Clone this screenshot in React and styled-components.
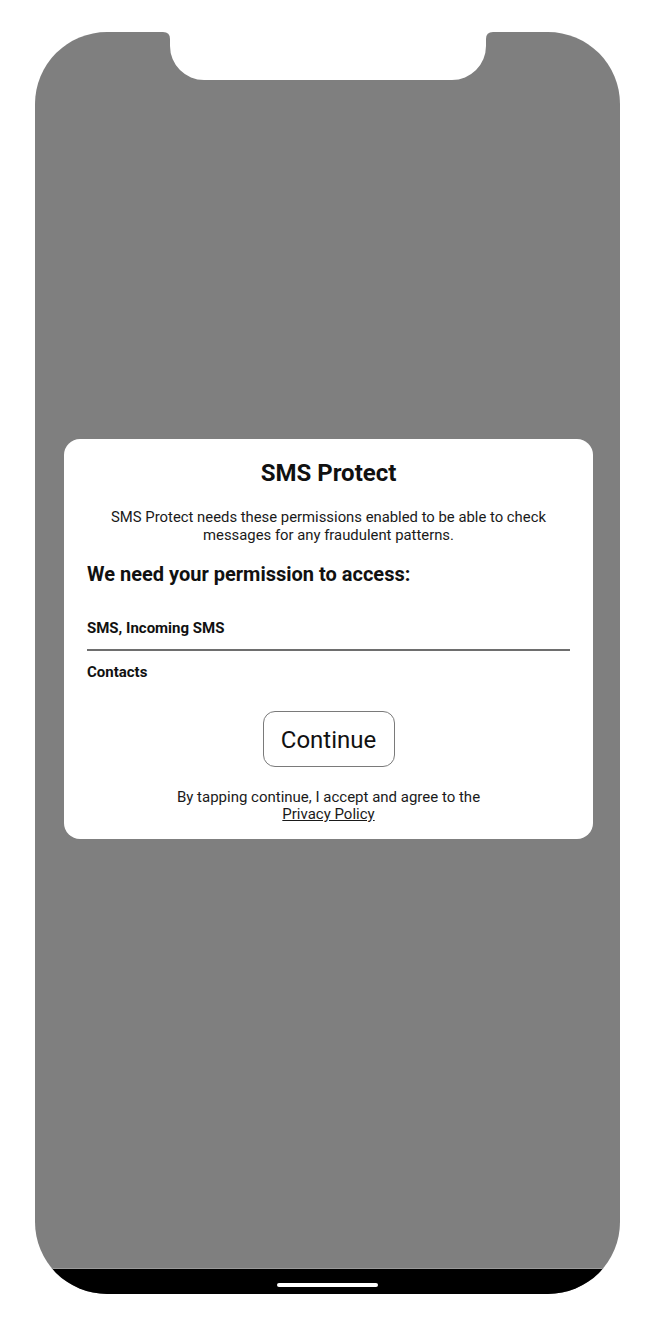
import React from "react"
import styled, { createGlobalStyle } from "styled-components"

const GlobalStyle = createGlobalStyle`
  body {
    margin: 0;
    background: #fff;
    font-family: Roboto, "Liberation Sans", sans-serif;
  }
`

const App = () => {
  return (
    <Page>
      <GlobalStyle />
      <Phone>
        <Notch width="330" height="48" viewBox="0 0 330 48">
          <path
            d="M0 0 H330 Q323 0 323 7 V14 A34 34 0 0 1 289 48 H41 A34 34 0 0 1 7 14 V7 Q7 0 0 0 Z"
            fill="#fff"
          />
        </Notch>
        <Screen>
          <Card>
            <Title>SMS Protect</Title>
            <Description>
              SMS Protect needs these permissions enabled to be able to check
              messages for any fraudulent patterns.
            </Description>
            <Heading>We need your permission to access:</Heading>
            <PermissionList>
              <PermissionItem>SMS, Incoming SMS</PermissionItem>
              <PermissionItem>Contacts</PermissionItem>
            </PermissionList>
            <ButtonRow>
              <ContinueButton type="button">Continue</ContinueButton>
            </ButtonRow>
            <Terms>
              By tapping continue, I accept and agree to the
              <br />
              <PolicyLink href="#">Privacy Policy</PolicyLink>
            </Terms>
          </Card>
        </Screen>
        <HomeBar>
          <HomeIndicator />
        </HomeBar>
      </Phone>
    </Page>
  )
}

export default App

const Page = styled.div`
  padding: 32px 0 0 35px;
`

const Phone = styled.div`
  position: relative;
  width: 585px;
  height: 1262px;
  border-radius: 72px;
  overflow: hidden;
  background: #7f7f7f;
  display: flex;
  flex-direction: column;
`

const Notch = styled.svg`
  position: absolute;
  top: 0;
  left: 50%;
  transform: translateX(-50%);
  display: block;
`

const Screen = styled.div`
  flex: 1;
  padding: 407px 0 0 29px;
`

const Card = styled.div`
  width: 529px;
  box-sizing: border-box;
  background: #fff;
  border-radius: 16px;
  padding: 20px 23px 16px;
  color: #111;
`

const Title = styled.h1`
  margin: 0;
  font-size: 24px;
  line-height: 28px;
  font-weight: 700;
  text-align: center;
`

const Description = styled.p`
  margin: 21px 0 0;
  font-size: 14.85px;
  line-height: 18px;
  text-align: center;
  color: #1a1a1a;
`

const Heading = styled.h2`
  margin: 18px 0 0;
  font-size: 20px;
  line-height: 24px;
  font-weight: 700;
`

const PermissionList = styled.div`
  margin-top: 22px;
  display: flex;
  flex-direction: column;
`

const PermissionItem = styled.div`
  font-size: 15px;
  line-height: 18px;
  font-weight: 700;
  padding: 11px 0 12px;
  border-bottom: 2px solid #6e6e6e;

  &:last-child {
    padding-top: 12px;
    border-bottom: none;
  }
`

const ButtonRow = styled.div`
  display: flex;
  justify-content: center;
  margin-top: 18px;
`

const ContinueButton = styled.button`
  width: 132px;
  height: 56px;
  border: 1px solid #7a7a7a;
  border-radius: 12px;
  background: #fff;
  color: #111;
  font-family: Roboto, "Liberation Sans", sans-serif;
  font-size: 24px;
  padding: 2px 0 0;
  cursor: pointer;
`

const Terms = styled.p`
  margin: 22px 0 0;
  font-size: 15px;
  line-height: 17px;
  text-align: center;
  color: #1a1a1a;
`

const PolicyLink = styled.a`
  color: #1a1a1a;
  text-decoration: underline;
`

const HomeBar = styled.div`
  height: 26px;
  box-sizing: border-box;
  background: #000;
  border-top: 1px solid #9a9a9a;
  display: flex;
  justify-content: center;
  padding-top: 14px;
`

const HomeIndicator = styled.div`
  width: 101px;
  height: 4px;
  border-radius: 2px;
  background: #fff;
`
